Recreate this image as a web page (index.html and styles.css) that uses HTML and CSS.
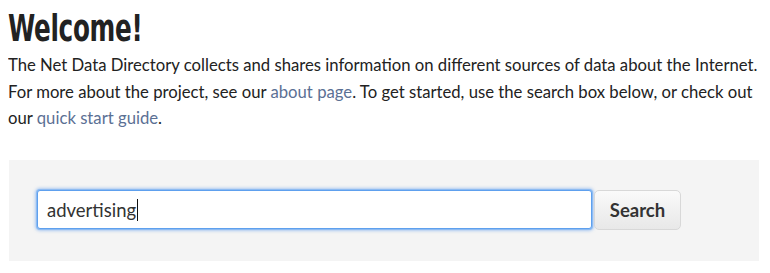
FILE: index.html
```html
<!DOCTYPE html>
<html>
<head>
<meta charset="utf-8">
<link rel="stylesheet" href="styles.css">
</head>
<body>
<h1 class="title">Welcome!</h1>
<p class="intro">The Net Data Directory collects and shares information on different sources of data about the Internet. For more about the project, see our <a class="link" href="#">about page</a>. To get started, use the search box below, or check out our <a class="link" href="#">quick start guide</a>.</p>
<form class="search-panel">
  <div class="search-field"><span class="search-text">advertising</span><span class="caret"></span></div>
  <button class="search-button" type="button">Search</button>
</form>
</body>
</html>
```
FILE: styles.css
```css
body {
  margin: 8px 2px 8px 8px;
  font-family: Lato, "Open Sans", sans-serif;
  color: #222;
  background: #fff;
}
.title {
  margin: 0;
  font-family: "DejaVu Sans", sans-serif;
  font-weight: 700;
  font-size: 38px;
  line-height: 40px;
  color: #222;
  display: inline-block;
  transform: scaleX(0.65);
  transform-origin: left center;
  letter-spacing: -0.5px;
}
.intro {
  margin: 4px -8px 0 0;
  font-size: 16.7px;
  line-height: 26.5px;
  color: #222;
}
.link {
  color: #5b7094;
  text-decoration: none;
}
.search-panel {
  margin: 28px 9px 0 1px;
  background: #f4f4f4;
  padding: 30px 28px 31px 28px;
  display: flex;
  align-items: center;
  gap: 2px;
  height: 40px;
  box-sizing: content-box;
}
.search-field {
  width: 544px;
  height: 37px;
  background: #fff;
  border: 1px solid #5ea0ee;
  box-shadow: 0 0 0 1px #8dbbf2, 0 0 3px 2px rgba(100, 160, 240, 0.5);
  border-radius: 3px;
  display: flex;
  align-items: center;
  padding-left: 9px;
  font-size: 18.5px;
  color: #333;
}
.caret {
  display: inline-block;
  width: 1px;
  height: 22px;
  background: #111;
  margin-left: 1px;
}
.search-button {
  width: 87px;
  height: 40px;
  font-family: Lato, sans-serif;
  font-weight: 700;
  font-size: 18.5px;
  color: #333;
  border: 1px solid #d8d8d8;
  border-radius: 5px;
  background: linear-gradient(#fafafa, #e8e8e8);
  padding: 0;
}
```
